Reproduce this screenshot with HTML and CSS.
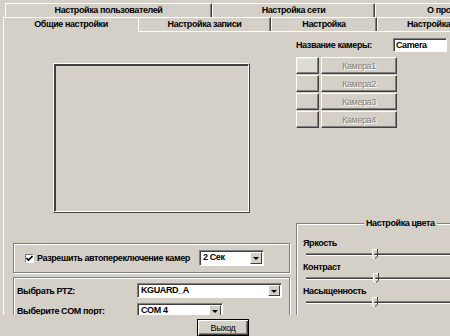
FILE: index.html
```html
<!DOCTYPE html>
<html lang="ru">
<head>
  <meta charset="UTF-8" />
  <title>Общие настройки</title>
  <link rel="stylesheet" href="styles.css">
</head>
<body>

  <div class="tabs">
    <div class="tab-row row-back">
      <div class="tab" style="width:207px">Настройка пользователей</div>
      <div class="tab" style="width:163px">Настройка сети</div>
      <div class="tab tab-cut" style="width:75px">О программе</div>
    </div>
    <div class="tab-row row-front">
      <div class="tab active" style="width:135px">Общие настройки</div>
      <div class="tab" style="width:133px">Настройка записи</div>
      <div class="tab" style="width:106px">Настройка</div>
      <div class="tab tab-cut" style="width:73px">Настройка PTZ</div>
    </div>
  </div>

  <div class="panel">
    <div class="col-left">
      <div class="preview"><div class="preview-inner"></div></div>

      <div class="group group-auto">
        <label class="check-label"><span class="check"><svg width="7" height="7" viewBox="0 0 7 7"><path d="M0.5 3 L2.5 5 L6.5 1" fill="none" stroke="#000" stroke-width="1.6"/></svg></span>Разрешить автопереключение камер</label>
        <div class="select" style="width:65px;height:16px">2 Сек<span class="drop"></span></div>
      </div>

      <div class="group group-ptz">
        <div class="form-row">
          <span class="form-label">Выбрать PTZ:</span>
          <div class="select" style="width:145px">KGUARD_A<span class="drop"></span></div>
        </div>
        <div class="form-row">
          <span class="form-label">Выберите COM порт:</span>
          <div class="select" style="width:86px">COM 4<span class="drop"></span></div>
        </div>
      </div>
    </div>

    <div class="col-right">
      <div class="cam-name">
        <span>Название камеры:</span>
        <div class="text-input">Camera</div>
      </div>

      <div class="cam-list">
        <div class="cam-row"><button class="btn btn-sq first"></button><button class="btn btn-cam">Камера1</button></div>
        <div class="cam-row"><button class="btn btn-sq"></button><button class="btn btn-cam">Камера2</button></div>
        <div class="cam-row"><button class="btn btn-sq"></button><button class="btn btn-cam">Камера3</button></div>
        <div class="cam-row"><button class="btn btn-sq"></button><button class="btn btn-cam">Камера4</button></div>
      </div>

      <fieldset class="color-box">
        <legend>Настройка цвета</legend>
        <div class="slider-label">Яркость</div>
        <div class="slider"><svg class="thumb" style="left:66px" width="6" height="10" viewBox="0 0 6 10"><path d="M0.5 8.5 V0.5 H5" fill="#d4d0c8" stroke="#fff"/><path d="M5.5 0 V7.5 L3 9.5" fill="none" stroke="#404040"/><path d="M0.5 8 L3 9.5" fill="none" stroke="#fff"/></svg></div>
        <div class="slider-label">Контраст</div>
        <div class="slider"><svg class="thumb" style="left:67px" width="6" height="10" viewBox="0 0 6 10"><path d="M0.5 8.5 V0.5 H5" fill="#d4d0c8" stroke="#fff"/><path d="M5.5 0 V7.5 L3 9.5" fill="none" stroke="#404040"/><path d="M0.5 8 L3 9.5" fill="none" stroke="#fff"/></svg></div>
        <div class="slider-label">Насыщенность</div>
        <div class="slider"><svg class="thumb" style="left:66px" width="6" height="10" viewBox="0 0 6 10"><path d="M0.5 8.5 V0.5 H5" fill="#d4d0c8" stroke="#fff"/><path d="M5.5 0 V7.5 L3 9.5" fill="none" stroke="#404040"/><path d="M0.5 8 L3 9.5" fill="none" stroke="#fff"/></svg></div>
        <div class="slider-label">..</div>
      </fieldset>
    </div>
  </div>

  <div class="footer">
    <button class="btn btn-exit">Выход</button>
  </div>

</body>
</html>
```

FILE: styles.css
```css
body { margin: 0; width: 450px; height: 336px; overflow: hidden; background: #d4d0c8; color: #000; font: bold 9px "Liberation Sans", Arial, sans-serif; letter-spacing: -0.4px; }

/* tabs */
.tabs { padding-top: 3px; }
.tab-row { display: flex; height: 14px; white-space: nowrap; }
.row-back { margin-left: 5px; }
.row-front { margin-left: 3px; position: relative; z-index: 1; }
.tab { flex: none; box-sizing: border-box; height: 14px; border-top: 1px solid #fff; border-left: 1px solid #fff; border-right: 1px solid #404040; box-shadow: inset -1px 0 #808080; text-align: center; line-height: 13px; overflow: hidden; }
.tab.active { height: 15px; background: #d4d0c8; border-right: none; box-shadow: none; }
.tab-cut { text-align: left; border-right: none; box-shadow: none; }
.row-back .tab-cut { padding-left: 51px; }
.row-front .tab-cut { padding-left: 29px; }

/* main panel */
.panel { margin-left: 3px; height: 283px; border-top: 1px solid #fff; border-left: 1px solid #fff; display: flex; overflow: hidden; }
.col-left { width: 287px; flex: none; }
.col-right { flex: 1; padding-left: 5px; min-width: 0; }

.preview { margin: 31px 0 0 49px; width: 197px; height: 150px; box-sizing: border-box; border: 1px solid; border-color: #fff #404040 #404040 #fff; }
.preview-inner { height: 100%; box-sizing: border-box; border: 1px solid; border-color: #404040 #fff #fff #404040; box-shadow: inset 1px 1px #404040; }

.group { margin-left: 9px; width: 277px; box-sizing: border-box; border: 1px solid #808080; box-shadow: inset 1px 1px #fff, 1px 1px #fff; }
.group-auto { margin-top: 30px; height: 30px; display: flex; align-items: center; padding: 0 0 0 11px; }
.group-ptz { margin-top: 4px; height: 60px; padding: 5px 0 0 3px; }

.check-label { display: flex; align-items: center; width: 174px; white-space: nowrap; }
.check { width: 9px; height: 9px; box-sizing: border-box; margin-right: 3px; background: #fff; border: 1px solid; border-color: #808080 #fff #fff #808080; display: flex; align-items: center; justify-content: center; }
.check svg { display: block; }

.form-row { display: flex; align-items: center; margin-bottom: 5px; }
.form-label { width: 120px; flex: none; }

.select { position: relative; box-sizing: border-box; height: 15px; background: #fff; border: 1px solid; border-color: #808080 #fff #fff #808080; box-shadow: inset 1px 1px #404040; padding-left: 3px; line-height: 13px; }
.drop { position: absolute; right: 1px; top: 1px; bottom: 1px; width: 12px; box-sizing: border-box; background: #d4d0c8; border: 1px solid; border-color: #fff #404040 #404040 #fff; }
.drop::after { content: ""; position: absolute; left: 2px; top: 4px; border: 3px solid transparent; border-top: 3px solid #000; border-bottom: 0; }

/* right column */
.cam-name { display: flex; align-items: center; justify-content: space-between; margin-top: 6px; height: 14px; padding-right: 3px; }
.text-input { width: 54px; height: 14px; box-sizing: border-box; background: #fff; border: 1px solid; border-color: #808080 #fff #fff #808080; box-shadow: inset 1px 1px #404040; padding-left: 2px; line-height: 12px; }

.btn { font: inherit; letter-spacing: inherit; margin: 0; padding: 0; background: #d4d0c8; box-sizing: border-box; border: 1px solid; border-color: #fff #404040 #404040 #fff; box-shadow: inset -1px -1px #808080; }
.cam-list { margin-top: 5px; display: flex; flex-direction: column; gap: 1px; }
.cam-row { display: flex; gap: 2px; height: 17px; }
.btn-sq { width: 23px; height: 17px; }
.btn-sq.first { box-shadow: inset -1px -1px #808080, inset 1px 1px #e8e6e2; background: #dedbd5; }
.btn-cam { width: 76px; height: 17px; font-weight: normal; color: #808080; text-shadow: 1px 1px #fff; }

.color-box { margin: 89px 0 0; padding: 8px 0 0 6px; width: 200px; height: 120px; border: 1px solid #808080; border-right: none; box-shadow: inset 1px 1px #fff; }
.color-box legend { margin-left: 61px; padding: 0 2px; line-height: 12px; background: #d4d0c8; white-space: nowrap; }
.slider-label { line-height: 12px; height: 12px; }
.slider { position: relative; height: 12px; margin-left: 3px; }
.slider::before { content: ""; position: absolute; left: 0; right: 0; top: 4px; height: 1px; border-top: 1px solid #808080; border-bottom: 1px solid #fff; background: #404040; }
.thumb { position: absolute; top: 0; display: block; }

/* footer */
.footer { padding: 4px 0 0 197px; }
.btn-exit { width: 52px; height: 17px; font-weight: normal; border-color: #000; box-shadow: inset 1px 1px #fff, inset -1px -1px #404040, inset -2px -2px #808080; }
```
